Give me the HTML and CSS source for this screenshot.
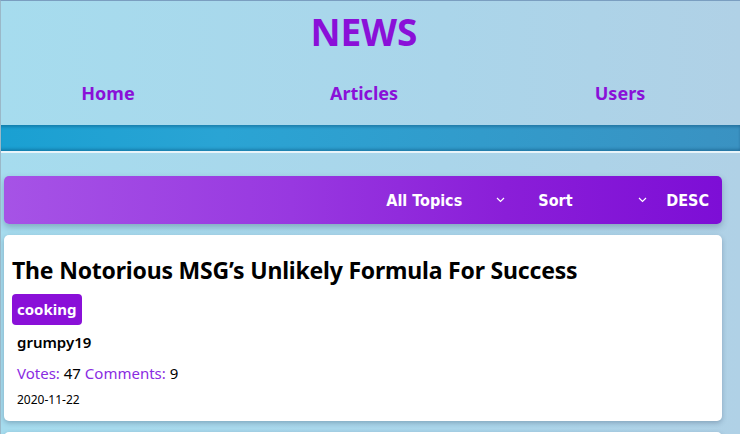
FILE: index.html
```html
<!DOCTYPE html>
<html>
<head>
<meta charset="utf-8">
<link rel="stylesheet" href="styles.css">
</head>
<body>
  <header class="header">
    <h1 class="logo">NEWS</h1>
    <nav class="nav">
      <a class="nav-link">Home</a>
      <a class="nav-link">Articles</a>
      <a class="nav-link">Users</a>
    </nav>
  </header>
  <div class="stripe"></div>
  <main class="main">
    <div class="filters">
      <div class="select select-topics"><span>All Topics</span><svg class="chev" width="9" height="6" viewBox="0 0 9 6"><path d="M1 1 L4.5 4.5 L8 1" fill="none" stroke="#fff" stroke-width="1.2"/></svg></div>
      <div class="select select-sort"><span>Sort</span><svg class="chev" width="9" height="6" viewBox="0 0 9 6"><path d="M1 1 L4.5 4.5 L8 1" fill="none" stroke="#fff" stroke-width="1.2"/></svg></div>
      <div class="order">DESC</div>
    </div>
    <article class="card">
      <h2 class="title">The Notorious MSG’s Unlikely Formula For Success</h2>
      <span class="tag">cooking</span>
      <div class="author">grumpy19</div>
      <div class="stats"><span class="label">Votes:</span> 47 <span class="label">Comments:</span> 9</div>
      <div class="date">2020-11-22</div>
    </article>
    <article class="card card-next"></article>
  </main>
</body>
</html>
```
FILE: styles.css
```css
html, body { margin: 0; padding: 0; }
body {
  width: 740px;
  height: 434px;
  overflow: hidden;
  background: linear-gradient(90deg, #a6dcee 0%, #aad5ea 60%, #b0d1e6 100%);
  font-family: "Noto Sans", "Open Sans", sans-serif;
  border-left: 1px solid #9ab8c8;
  border-top: 1px solid #7a9ec0;
  box-sizing: border-box;
}
.header {
  width: 726px;
  height: 124px;
  display: flex;
  flex-direction: column;
  align-items: flex-start;
}
.logo {
  align-self: center;
  margin: 9px 0 0;
  font-size: 37px;
  line-height: 44px;
  font-weight: 700;
  color: #8a10d8;
}
.nav {
  display: grid;
  grid-template-columns: repeat(3, 1fr);
  margin-top: 27px;
  margin-left: -21px;
  width: 768px;
}
.nav-link {
  text-align: center;
  font-weight: 700;
  font-size: 18px;
  line-height: 24px;
  color: #8a10d8;
}
.stripe {
  width: 740px;
  margin-left: -1px;
  height: 26px;
  background: linear-gradient(90deg, #1aa0d2 0%, #2aa4d4 30%, #3a92c2 100%);
  box-shadow: inset 0 3px 3px -1px rgba(0,60,100,0.35), inset 0 -3px 3px -1px rgba(0,60,100,0.35);
  border-bottom: 2px solid #e8f4fa;
}
.main { padding: 23px 0 0 3px; display: flex; flex-direction: column; gap: 11px; }
.filters {
  width: 718px;
  height: 48px;
  border-radius: 5px;
  background: linear-gradient(90deg, #a653e6 0%, #9838e0 40%, #8a1ed8 70%, #7d0ed6 100%);
  box-shadow: 0 3px 6px rgba(40,60,90,0.3);
  display: flex;
  align-items: center;
  justify-content: flex-end;
  padding-right: 13px;
  box-sizing: border-box;
  color: #fff;
  font-family: "DejaVu Sans Condensed", "DejaVu Sans", sans-serif;
  font-weight: 700;
  font-size: 16px;
  font-stretch: condensed;
}
.select { display: flex; align-items: center; justify-content: space-between; }
.select-topics { width: 119px; margin-right: 33px; }
.select-sort { width: 109px; margin-right: 19px; }
.chev { display: block; }
.card {
  width: 718px;
  height: 186px;
  background: #fff;
  border-radius: 5px;
  box-shadow: 0 2px 5px rgba(40,60,90,0.3);
  padding: 20px 8px 0;
  box-sizing: border-box;
  display: flex;
  flex-direction: column;
  align-items: flex-start;
}
.title {
  margin: 0;
  font-size: 23px;
  line-height: 30px;
  font-weight: 700;
  color: #000;
  letter-spacing: -0.2px;
}
.tag {
  margin-top: 9px;
  background: #8a10d8;
  color: #fff;
  font-weight: 700;
  font-size: 15px;
  line-height: 31px;
  padding: 0 5px;
  border-radius: 4px;
}
.author { margin: 5px 0 0 5px; font-size: 15px; font-weight: 600; line-height: 24px; }
.stats { margin: 7px 0 0 5px; font-size: 15px; line-height: 24px; }
.label { color: #8a2be2; }
.date { margin: 5px 0 0 5px; font-size: 12px; line-height: 20px; }
.card-next { height: 40px; }
```
